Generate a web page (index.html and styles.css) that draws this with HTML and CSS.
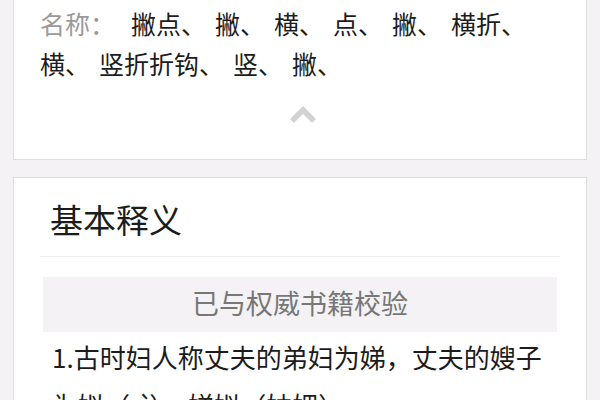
FILE: index.html
```html
<!DOCTYPE html>
<html lang="zh-CN">
<head>
    <meta charset="UTF-8">
    <meta name="viewport" content="width=device-width, initial-scale=1.0">
    <title>娣</title>
    <link rel="stylesheet" href="styles.css">
</head>
<body>

    <div class="card strokes">
        <div class="stroke-list">
            <span class="label">名称：</span><span class="item">撇点、</span><span class="item">撇、</span><span class="item">横、</span><span class="item">点、</span><span class="item">撇、</span><span class="item">横折、</span><span class="item">横、</span><span class="item">竖折折钩、</span><span class="item">竖、</span><span class="item">撇、</span>
        </div>
        <div class="fold">
            <svg width="28" height="22" viewBox="0 0 28 22">
                <polyline points="3,18 14,7 25,18" fill="none" stroke="#d2d2d2" stroke-width="5.5" />
            </svg>
        </div>
    </div>

    <div class="card meaning">
        <h2 class="title">基本释义</h2>
        <div class="verified">已与权威书籍校验</div>
        <p class="def">1.古时妇人称丈夫的弟妇为娣，丈夫的嫂子为姒（sì）。娣姒（妯娌）。</p>
    </div>

</body>
</html>
```

FILE: styles.css
```css
body {
    margin: 0;
    padding: 0 13px;
    background-color: #f5f2f5;
    font-family: "Noto Sans CJK SC", "Noto Sans", sans-serif;
    color: #1c1c1c;
    overflow: hidden;
}
.card {
    background-color: #fff;
    border: 1px solid #dedede;
}
.strokes {
    margin-top: -20px;
    padding: 22px 26px 0 26px;
}
.stroke-list {
    font-size: 25px;
    line-height: 40px;
}
.label {
    color: #9a9a9a;
    margin-right: 16px;
}
.item {
    display: inline-block;
    margin-right: 9px;
}
.fold {
    height: 40px;
    margin-top: 11px;
    padding-bottom: 25px;
    display: flex;
    align-items: center;
    justify-content: center;
}
.fold svg {
    margin-left: 6px;
}
.meaning {
    margin-top: 17px;
    padding: 0 26px;
}
.title {
    margin: 0;
    padding: 4px 10px 0 10px;
    font-size: 33px;
    font-weight: normal;
    line-height: 74px;
    border-bottom: 1px solid #eeeeee;
}
.verified {
    margin: 20px 3px 0 3px;
    height: 51px;
    padding-bottom: 4px;
    line-height: 51px;
    background-color: #f4f2f4;
    color: #777;
    font-size: 27px;
    text-align: center;
}
.def {
    margin: 1px 0 0 0;
    padding: 0 0 0 12px;
    font-size: 26px;
    line-height: 48px;
}
```
